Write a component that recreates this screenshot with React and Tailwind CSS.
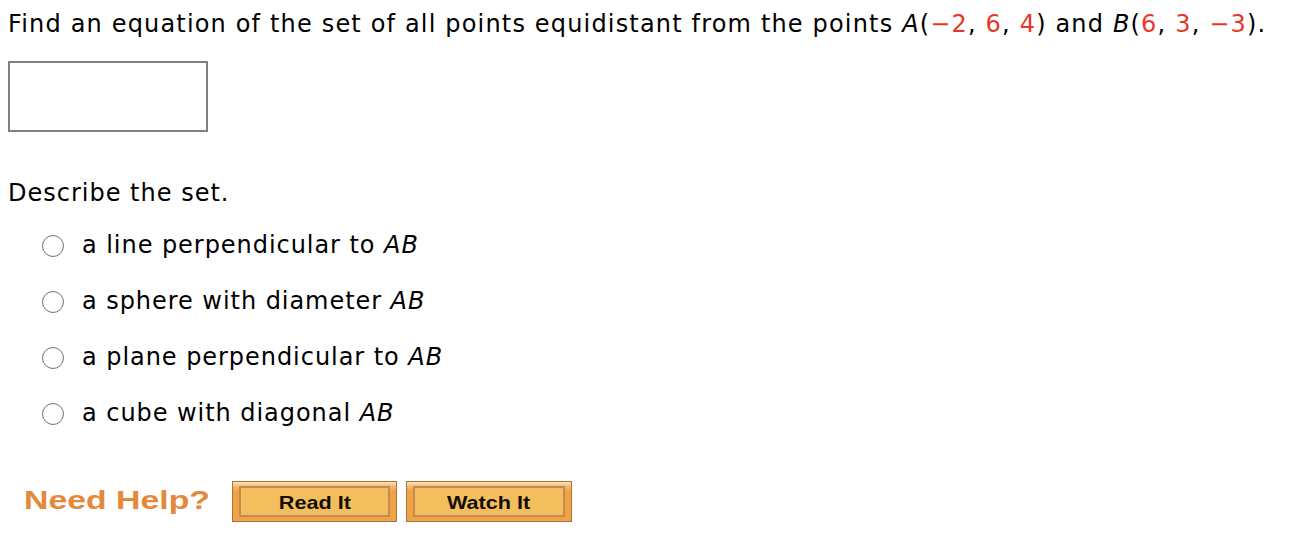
import React from "react";

const R = ({ children }) => <span className="text-[#e8372a]">{children}</span>;
const I = ({ children }) => <span className="italic">{children}</span>;

function Radio({ children }) {
  return (
    <div className="flex items-center h-[29px]">
      <span className="w-[22px] h-[22px] rounded-full border-[1.5px] border-[#737373] bg-white shrink-0" />
      <span className="ml-[18px]">{children}</span>
    </div>
  );
}

function Btn({ label, w }) {
  return (
    <div
      className="h-[41px] border border-[#a9743a] px-[6px] py-[4px] flex bg-[linear-gradient(to_bottom,#fbe3bb_0px,#f4b468_5px,#f0a346_9px,#f0a346_100%)]"
      style={{ width: w }}
    >
      <div className="flex-1 border-2 border-[#c58b4e] bg-[#f3be5d] flex items-center justify-center">
        <span className="mt-[4px] inline-block scale-x-[1.17] font-['Liberation_Sans',Arial,sans-serif] font-bold text-[18.5px] leading-none tracking-normal text-[#140e06]">
          {label}
        </span>
      </div>
    </div>
  );
}

export default function App() {
  return (
    <div className="bg-white w-[1304px] h-[542px] pl-[8px] pt-[10px] text-black font-['DejaVu_Sans',Verdana,sans-serif] text-[24px] leading-[29px] tracking-[1.1px]">
      <div className="whitespace-nowrap tracking-[1.17px]">
        Find an equation of the set of all points equidistant from the points <I>A</I>(<R>−2</R>, <R>6</R>, <R>4</R>) and <I>B</I>(<R>6</R>, <R>3</R>, <R>−3</R>).
      </div>
      <div className="mt-[22px] w-[200px] h-[71px] border-2 border-[#808080] bg-white" />
      <div className="mt-[47px] tracking-[1px]">Describe the set.</div>
      <div className="mt-[23px] pl-[34px] flex flex-col gap-[27px] tracking-[0.95px]">
        <Radio>a line perpendicular to <I>AB</I></Radio>
        <Radio>a sphere with diameter <I>AB</I></Radio>
        <Radio>a plane perpendicular to <I>AB</I></Radio>
        <Radio>a cube with diagonal <I>AB</I></Radio>
      </div>
      <div className="mt-[53px] flex items-center">
        <div className="w-[224px] pl-[16px]">
          <span className="inline-block origin-left scale-x-[1.3] font-['Liberation_Sans',Arial,sans-serif] font-bold text-[26px] leading-none tracking-normal text-[#e4893a]">
            Need Help?
          </span>
        </div>
        <Btn label="Read It" w={165} />
        <div className="w-[9px]" />
        <Btn label="Watch It" w={166} />
      </div>
    </div>
  );
}
